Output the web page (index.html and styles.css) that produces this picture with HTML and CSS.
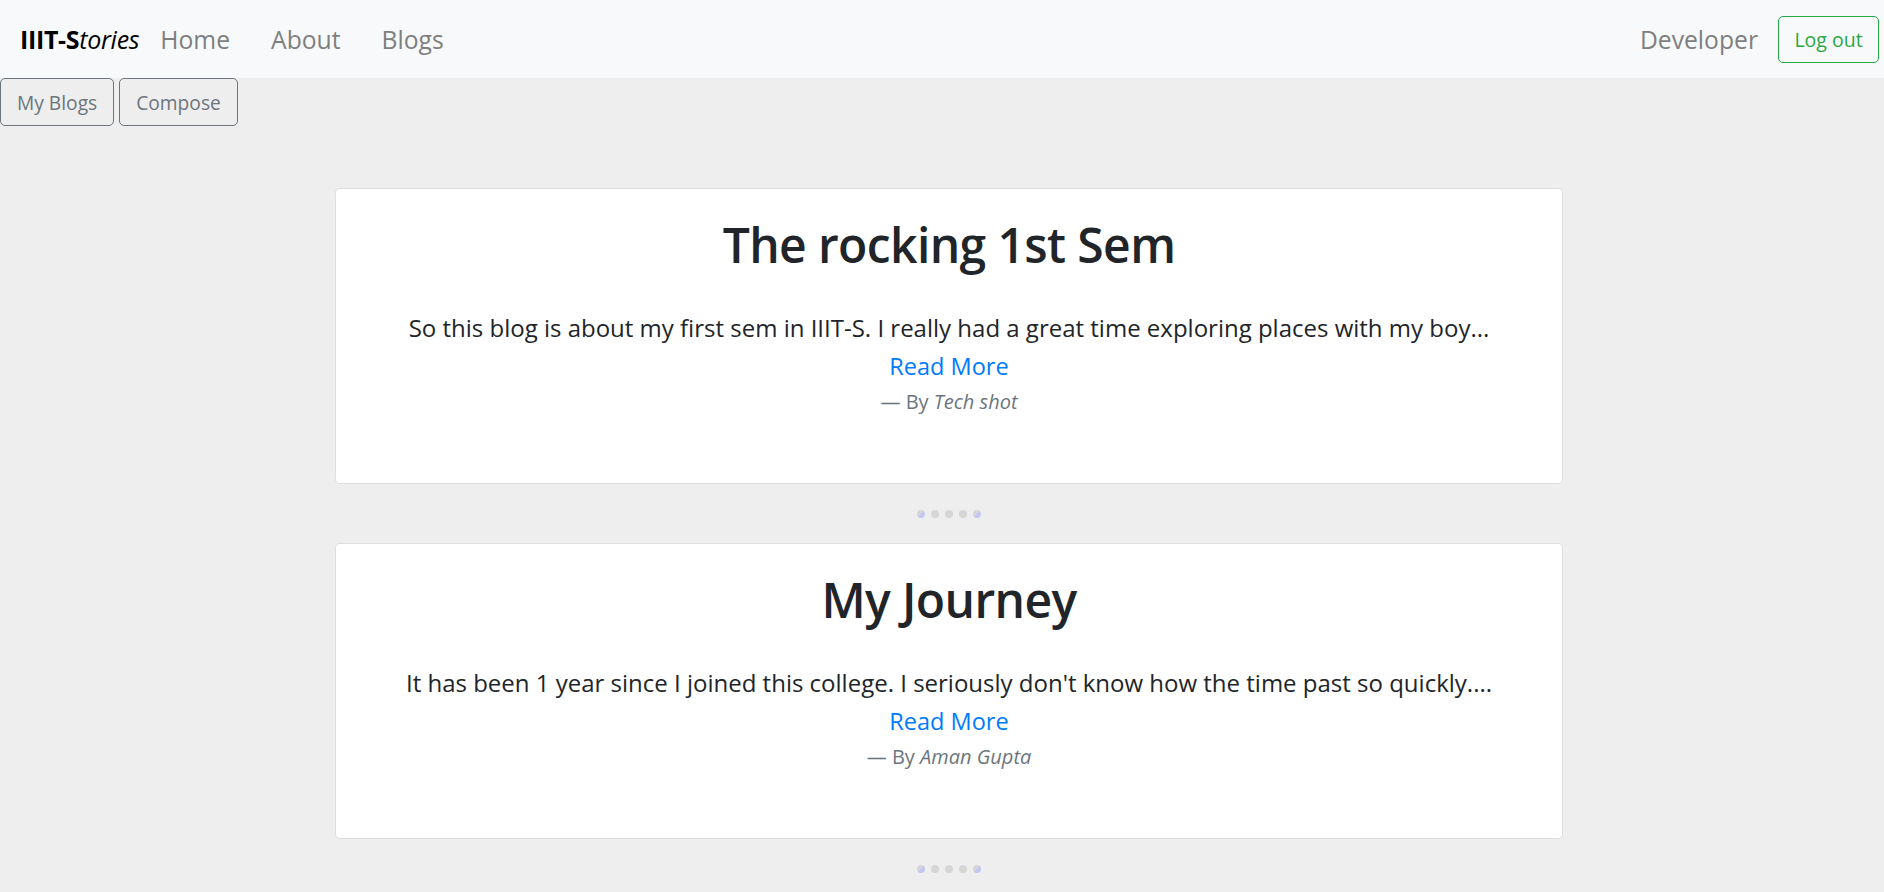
FILE: index.html
```html
<!DOCTYPE html>
<html>
<head>
<meta charset="utf-8">
<link rel="stylesheet" href="styles.css">
</head>
<body>
<nav class="navbar">
  <a class="brand" href="#"><b>IIIT-S</b><i>tories</i></a>
  <ul class="nav-links">
    <li><a href="#">Home</a></li>
    <li><a href="#">About</a></li>
    <li><a href="#">Blogs</a></li>
  </ul>
  <div class="nav-right">
    <a class="dev" href="#">Developer</a>
    <button class="btn-logout">Log out</button>
  </div>
</nav>
<div class="tools">
  <button class="btn-tool">My Blogs</button>
  <button class="btn-tool">Compose</button>
</div>
<main class="feed">
  <article class="card">
    <h1 class="card-title">The rocking 1st Sem</h1>
    <p class="card-text">So this blog is about my first sem in IIIT-S. I really had a great time exploring places with my boy...</p>
    <div class="more"><a class="read-more" href="#">Read More</a></div>
    <footer class="byline">— By <cite>Tech shot</cite></footer>
  </article>
  <div class="dots"><span class="dot tint"></span><span class="dot"></span><span class="dot"></span><span class="dot"></span><span class="dot tint"></span></div>
  <article class="card">
    <h1 class="card-title">My Journey</h1>
    <p class="card-text">It has been 1 year since I joined this college. I seriously don't know how the time past so quickly....</p>
    <div class="more"><a class="read-more" href="#">Read More</a></div>
    <footer class="byline">— By <cite>Aman Gupta</cite></footer>
  </article>
  <div class="dots"><span class="dot tint"></span><span class="dot"></span><span class="dot"></span><span class="dot"></span><span class="dot tint"></span></div>
</main>
</body>
</html>
```
FILE: styles.css
```css
* { box-sizing: border-box; }
html, body { margin: 0; padding: 0; }
body {
  background: #eeeeee;
  font-family: "Open Sans", "Noto Sans", sans-serif;
  color: #212529;
  overflow: hidden;
}
a { text-decoration: none; }

.navbar {
  height: 78px;
  background: #f8f9fa;
  display: flex;
  align-items: center;
  padding: 0 5px 0 20px;
}
.brand {
  color: #000;
  font-size: 25px;
  margin-right: 21px;
  letter-spacing: -0.3px;
}
.brand b { font-weight: 700; }
.brand i { font-style: italic; }
.nav-links {
  list-style: none;
  display: flex;
  margin: 0;
  padding: 0;
  gap: 41px;
}
.nav-links a, .dev {
  color: #7f7f7f;
  font-size: 24.7px;
}
.nav-right {
  margin-left: auto;
  display: flex;
  align-items: center;
  gap: 20px;
}
.btn-logout {
  height: 47px;
  width: 101px;
  border: 1px solid #28a745;
  border-radius: 5px;
  background: transparent;
  color: #28a745;
  font-family: inherit;
  font-size: 19.5px;
  padding: 0;
}

.tools {
  display: flex;
  gap: 5px;
}
.btn-tool {
  height: 48px;
  padding: 0 16px;
  border: 1px solid #6c757d;
  border-radius: 5px;
  background: transparent;
  color: #6c757d;
  font-family: inherit;
  font-size: 19.2px;
}

.feed {
  padding-top: 62px;
}
.card {
  margin-left: 335px;
  width: 1228px;
  height: 296px;
  background: #fff;
  border: 1px solid rgba(0,0,0,0.125);
  border-radius: 5px;
  text-align: center;
  padding-top: 27px;
}
.card-title {
  margin: 0;
  font-size: 48px;
  font-weight: 600;
  letter-spacing: -0.6px;
  line-height: 58px;
}
.card-text {
  margin: 37px 0 0;
  font-size: 24px;
  line-height: 34px;
}
.more {
  margin-top: 5px;
  line-height: 32px;
}
.read-more {
  color: #007bff;
  font-size: 23.5px;
}
.byline {
  margin-top: 3px;
  color: #6c757d;
  font-size: 20px;
  line-height: 28px;
}
.byline cite { font-style: italic; }

.dots {
  height: 59px;
  display: flex;
  justify-content: center;
  align-items: center;
  gap: 6px;
  padding-left: 14px;
}
.dot {
  width: 8px;
  height: 8px;
  border-radius: 50%;
  background: #d6d6d6;
}
.dot.tint {
  background: linear-gradient(135deg, #d6d6d6 50%, #c5c6f2 50%);
}
```
